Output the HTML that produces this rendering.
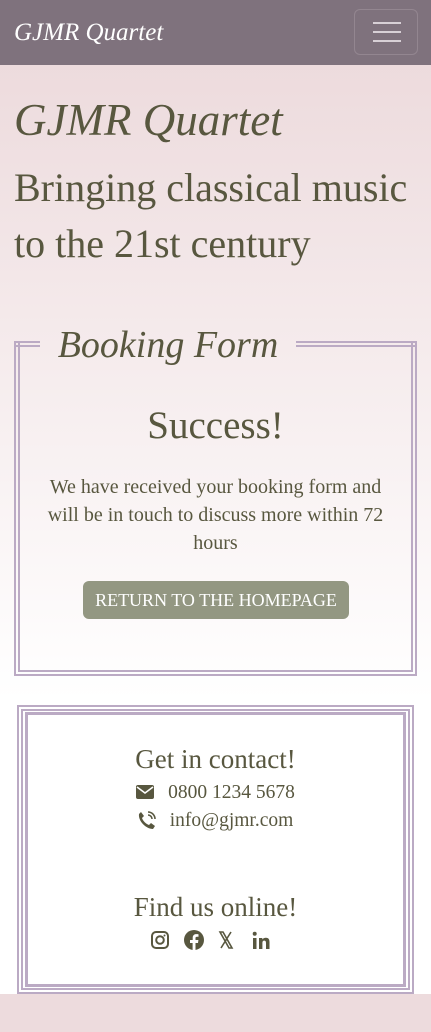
<!DOCTYPE html>
<html><head><style>
*{margin:0;padding:0;box-sizing:border-box}
body{width:431px;height:1032px;overflow:hidden;font-family:"Liberation Serif",serif;color:#58573f;background:#eddbdd;position:relative}
.nav{height:65px;background:#7f727d;position:relative}
.brand{position:absolute;left:14px;top:19px;color:#fff;font-style:italic;font-size:25px}
.tog{position:absolute;left:354px;top:9px;width:64px;height:46px;border:1px solid #938690;border-radius:6px}
.tog i{position:absolute;left:18px;width:28px;height:2px;background:#d8d0d6}
.main{height:635px;background:linear-gradient(#eddbdd,#fff)}
h1{position:absolute;left:14px;top:94px;font-style:italic;font-weight:normal;font-size:45px}
.sub{position:absolute;left:14px;top:160px;font-size:40px;line-height:56px;white-space:nowrap}
.frame{position:absolute;left:14px;top:341px;width:403px;height:335px;border:6px double #bbaac4;border-top:none}
.tl{position:absolute;top:341px;height:6px;border-top:2px solid #bbaac4;border-bottom:2px solid #bbaac4}
.legend{position:absolute;left:40px;top:323px;width:256px;text-align:center;font-style:italic;font-size:38px}
.succ{position:absolute;left:0;width:431px;top:403px;text-align:center;font-size:39px}
.msg{position:absolute;left:36px;width:359px;top:473px;text-align:center;font-size:20px;line-height:28px}
.btn{position:absolute;left:83px;top:581px;width:266px;height:38px;background:#939782;color:#fff;border-radius:6px;text-align:center;line-height:38px;font-size:18px}
.foot{position:absolute;left:0;top:700px;width:431px;height:294px;background:#fff}
.ff{position:absolute;left:17px;top:705px;width:397px;height:289px;border:6px double #bbaac4}
.ff2{position:absolute;left:25px;top:712px;width:381px;height:275px;border:3px solid #bbaac4}
.c{position:absolute;left:0;width:431px;text-align:center}
</style></head><body>
<div class="nav"><div class="brand">GJMR Quartet</div><div class="tog"><i style="top:12px"></i><i style="top:21px"></i><i style="top:30px"></i></div></div>
<div class="main"></div>
<h1>GJMR Quartet</h1>
<div class="sub">Bringing classical music<br>to the 21st century</div>
<div class="frame"></div>
<div class="tl" style="left:14px;width:26px"></div>
<div class="tl" style="left:296px;width:121px"></div>
<div class="legend">Booking Form</div>
<div class="succ">Success!</div>
<div class="msg">We have received your booking form and will be in touch to discuss more within 72 hours</div>
<div class="btn">RETURN TO THE HOMEPAGE</div>
<div class="foot"></div>
<div class="ff"></div><div class="ff2"></div>
<div class="c" style="top:744px;font-size:27px">Get in contact!</div>
<div class="c" style="top:782px;font-size:19.5px"><svg width="18" height="14" viewBox="0 0 18 14" style="vertical-align:-1px;margin-right:14px"><rect width="18" height="14" rx="2" fill="#58573f"/><path d="M1 2l8 6 8-6" stroke="#fff" stroke-width="1.6" fill="none"/></svg>0800 1234 5678</div>
<div class="c" style="top:810px;font-size:19.5px"><svg width="18" height="18" viewBox="0 0 18 18" style="vertical-align:-3px;margin-right:14px"><path d="M3 1l3 4-2 2c1 3 4 6 7 7l2-2 4 3-2 3C8 18 0 10 1 3z" fill="#58573f"/><path d="M10 4a4 4 0 0 1 4 4M10 1a7 7 0 0 1 7 7" stroke="#58573f" stroke-width="1.6" fill="none"/></svg>info@gjmr.com</div>
<div class="c" style="top:892px;font-size:27px">Find us online!</div>
<svg width="122" height="22" viewBox="0 0 122 22" style="position:absolute;left:150px;top:929px">
<rect x="2" y="3" width="16" height="16" rx="4" stroke="#58573f" stroke-width="2" fill="none"/><circle cx="10" cy="11" r="3.8" stroke="#58573f" stroke-width="2" fill="none"/><circle cx="14.5" cy="6.5" r="1" fill="#58573f"/>
<circle cx="44" cy="11" r="10" fill="#58573f"/><path d="M45.5 21v-7h2.5l.4-3h-2.9V9.2c0-.9.3-1.4 1.5-1.4h1.5V5.2c-.3 0-1.2-.1-2.2-.1-2.2 0-3.6 1.3-3.6 3.8V11H40v3h2.6v7z" fill="#fff"/>
<path d="M70 3h3l9 16h-3zM81 3l-10 16" stroke="#58573f" stroke-width="1.6" fill="none"/>
<rect x="103" y="9" width="3.5" height="11" fill="#58573f"/><circle cx="104.7" cy="4.8" r="2" fill="#58573f"/><path d="M109 9h3.3v1.5c.7-1.2 2-1.8 3.6-1.8 3 0 3.6 2 3.6 4.6V20H116v-5.8c0-1.5-.3-2.6-1.8-2.6s-1.8 1.2-1.8 2.6V20H109z" fill="#58573f"/>
</svg>
</body></html>
